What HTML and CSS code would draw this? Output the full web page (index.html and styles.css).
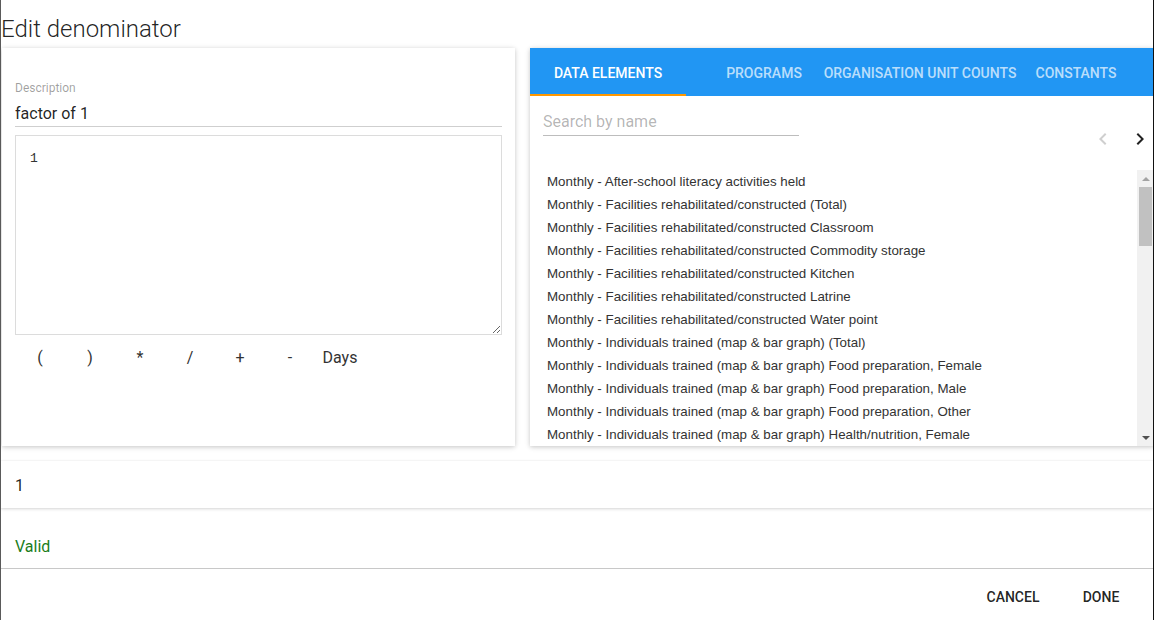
FILE: index.html
```html
<!DOCTYPE html>
<html>
<head>
<meta charset="utf-8">
<link rel="stylesheet" href="styles.css">
</head>
<body>
<div class="dialog">
  <h1 class="title">Edit denominator</h1>
  <div class="panes">
    <div class="paper left">
      <div class="field">
        <label class="field-label">Description</label>
        <div class="field-input">factor of 1</div>
      </div>
      <textarea class="formula" readonly>1</textarea>
      <div class="ops">
        <span class="op">(</span>
        <span class="op">)</span>
        <span class="op">*</span>
        <span class="op">/</span>
        <span class="op">+</span>
        <span class="op">-</span>
        <span class="op">Days</span>
      </div>
    </div>
    <div class="paper right">
      <div class="tabs">
        <div class="tab active">DATA ELEMENTS</div>
        <div class="tab">PROGRAMS</div>
        <div class="tab">ORGANISATION UNIT COUNTS</div>
        <div class="tab">CONSTANTS</div>
      </div>
      <div class="search-row">
        <div class="search">Search by name</div>
        <div class="pager">
          <svg class="chev disabled" viewBox="0 0 24 24" width="24" height="24"><path d="M15.41 7.41L14 6l-6 6 6 6 1.41-1.41L10.83 12z"/></svg>
          <svg class="chev" viewBox="0 0 24 24" width="24" height="24"><path d="M8.59 16.59L10 18l6-6-6-6-1.41 1.41L13.17 12z"/></svg>
        </div>
      </div>
      <div class="listbox">
        <div class="items">
          <div class="item">Monthly - After-school literacy activities held</div>
          <div class="item">Monthly - Facilities rehabilitated/constructed (Total)</div>
          <div class="item">Monthly - Facilities rehabilitated/constructed Classroom</div>
          <div class="item">Monthly - Facilities rehabilitated/constructed Commodity storage</div>
          <div class="item">Monthly - Facilities rehabilitated/constructed Kitchen</div>
          <div class="item">Monthly - Facilities rehabilitated/constructed Latrine</div>
          <div class="item">Monthly - Facilities rehabilitated/constructed Water point</div>
          <div class="item">Monthly - Individuals trained (map &amp; bar graph) (Total)</div>
          <div class="item">Monthly - Individuals trained (map &amp; bar graph) Food preparation, Female</div>
          <div class="item">Monthly - Individuals trained (map &amp; bar graph) Food preparation, Male</div>
          <div class="item">Monthly - Individuals trained (map &amp; bar graph) Food preparation, Other</div>
          <div class="item">Monthly - Individuals trained (map &amp; bar graph) Health/nutrition, Female</div>
        </div>
        <div class="scrollbar">
          <div class="arrow up"></div>
          <div class="track"><div class="thumb"></div></div>
          <div class="arrow down"></div>
        </div>
      </div>
    </div>
  </div>
  <div class="paper expression">1</div>
  <div class="status">Valid</div>
  <div class="actions">
    <button class="btn">CANCEL</button>
    <button class="btn">DONE</button>
  </div>
</div>
</body>
</html>
```

FILE: styles.css
```css
html, body {
  margin: 0;
  padding: 0;
  background: #fff;
}
body {
  font-family: Roboto, "Liberation Sans", sans-serif;
  color: rgba(0, 0, 0, 0.87);
}
.dialog {
  width: 1154px;
  height: 620px;
  box-sizing: border-box;
  border-left: 1px solid #5a5a5a;
  border-right: 1px solid #111;
  overflow: hidden;
  display: flex;
  flex-direction: column;
}
.title {
  margin: 0;
  padding: 13px 0 3px 0;
  font-size: 24px;
  line-height: 32px;
  font-weight: 300;
  color: rgba(0, 0, 0, 0.87);
  white-space: nowrap;
}
.panes {
  display: flex;
  gap: 15px;
  padding-left: 1px;
  height: 398px;
  flex: none;
}
.paper {
  background: #fff;
  box-shadow: 0 1px 6px rgba(0, 0, 0, 0.12), 0 1px 4px rgba(0, 0, 0, 0.12);
}
.left {
  width: 513px;
  flex: none;
  box-sizing: border-box;
  padding: 32px 13px 0 13px;
}
.field-label {
  display: block;
  font-size: 12px;
  line-height: 16px;
  color: rgba(0, 0, 0, 0.38);
}
.field-input {
  margin-top: 6px;
  font-size: 16px;
  line-height: 24px;
  border-bottom: 1px solid #cfcfcf;
  color: rgba(0, 0, 0, 0.87);
}
.formula {
  display: block;
  margin-top: 8px;
  width: 487px;
  height: 200px;
  box-sizing: border-box;
  border: 1px solid #dcdcdc;
  padding: 15px 14px;
  font-family: "Liberation Mono", monospace;
  font-size: 13px;
  line-height: 16px;
  color: #333;
  resize: vertical;
  outline: none;
  background: #fff;
}
.ops {
  margin-top: 11px;
  display: flex;
  height: 24px;
}
.op {
  width: 50px;
  text-align: center;
  font-size: 16px;
  line-height: 24px;
  color: #333;
}
.right {
  width: 624px;
  flex: none;
  display: flex;
  flex-direction: column;
}
.tabs {
  display: flex;
  background: #2196f3;
  height: 48px;
}
.tab {
  width: 156px;
  flex: none;
  box-sizing: border-box;
  display: flex;
  align-items: center;
  justify-content: center;
  font-size: 14px;
  font-weight: 500;
  color: rgba(255, 255, 255, 0.7);
  white-space: nowrap;
  padding-top: 4px;
  border-bottom: 2px solid transparent;
}
.tab.active {
  color: #fff;
  border-bottom-color: #ff9800;
}
.search-row {
  display: flex;
  justify-content: space-between;
  align-items: flex-start;
  padding: 14px 0 0 13px;
}
.search {
  width: 256px;
  font-size: 16px;
  line-height: 24px;
  padding-bottom: 1px;
  border-bottom: 1px solid #bdbdbd;
  color: rgba(0, 0, 0, 0.3);
}
.pager {
  display: flex;
  gap: 13px;
  margin-top: 17px;
  margin-right: 2px;
}
.chev {
  fill: #222;
  display: block;
}
.chev.disabled {
  fill: #cfcfcf;
}
.listbox {
  margin-top: 19px;
  height: 276px;
  display: flex;
  overflow: hidden;
}
.items {
  flex: 1;
  padding-left: 17px;
  overflow: hidden;
}
.item {
  height: 23px;
  line-height: 23px;
  font-family: "Liberation Sans", Arial, sans-serif;
  font-size: 13.333px;
  color: #333;
  white-space: nowrap;
}
.scrollbar {
  width: 17px;
  flex: none;
  background: #f1f1f1;
  display: flex;
  flex-direction: column;
}
.arrow {
  height: 17px;
  flex: none;
  display: flex;
  align-items: center;
  justify-content: center;
}
.arrow::before {
  content: "";
  width: 0;
  height: 0;
  border-left: 4px solid transparent;
  border-right: 4px solid transparent;
}
.arrow.up::before {
  border-bottom: 4px solid #a3a3a3;
}
.arrow.down::before {
  border-top: 4px solid #505050;
}
.track {
  flex: 1;
  padding: 0 2px;
}
.thumb {
  height: 59px;
  background: #c1c1c1;
}
.expression {
  margin-top: 15px;
  height: 47px;
  flex: none;
  box-sizing: border-box;
  padding: 2px 0 0 14px;
  display: flex;
  align-items: center;
  font-size: 16px;
  color: rgba(0, 0, 0, 0.87);
  box-shadow: 0 1px 3px rgba(0, 0, 0, 0.16), 0 0 1px rgba(0, 0, 0, 0.08);
}
.status {
  padding: 27px 0 9px 14px;
  font-size: 16px;
  line-height: 24px;
  color: #1b7d1b;
  border-bottom: 1px solid #c8c8c8;
}
.actions {
  display: flex;
  justify-content: flex-end;
  padding: 10px 8px 0 0;
}
.btn {
  min-width: 88px;
  height: 36px;
  padding: 0 16px;
  border: none;
  background: transparent;
  font-family: Roboto, "Liberation Sans", sans-serif;
  font-size: 14px;
  font-weight: 500;
  color: rgba(0, 0, 0, 0.87);
}
```
